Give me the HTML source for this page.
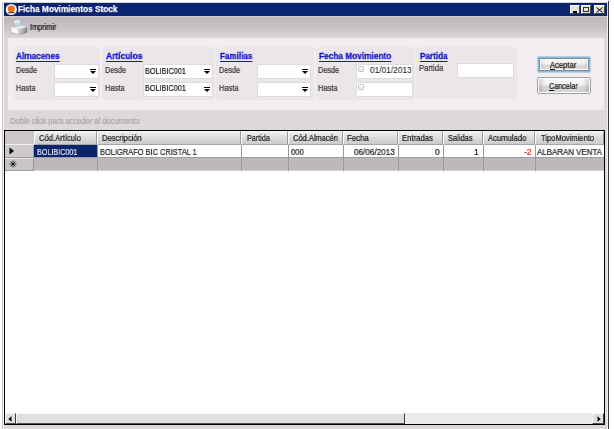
<!DOCTYPE html>
<html><head><meta charset="utf-8">
<style>
*{margin:0;padding:0;box-sizing:border-box}
html,body{width:614px;height:429px;overflow:hidden;background:#fff;font-family:"Liberation Sans",sans-serif}
.a{position:absolute}
.t{position:absolute;white-space:nowrap;line-height:1;transform-origin:0 0;will-change:transform}
.box{position:absolute;background:#fff;border:1px solid #dedade}
.grp{position:absolute;background:#eae6ea;border-radius:3px}
.hc{position:absolute;top:131px;height:14px;background:linear-gradient(#f0eef0,#e0dee0 40%,#cecace);border-left:1px solid #fafafa;border-top:1px solid #f6f6f6;border-right:1px solid #9c989c;border-bottom:1px solid #a8a4a8}
.vl{position:absolute;width:1px;background:#9c989c}
.wb{position:absolute;background:#e6e2dc;border-top:1px solid #fff;border-left:1px solid #fff;border-right:1px solid #404040;border-bottom:1px solid #404040}
</style></head><body>
<div class="a" style="left:2px;top:2px;width:607px;height:427px;background:#dcd8dc;border-left:1px solid #c8c4c8;border-top:1px solid #d4d0d4;border-right:1px solid #383838"></div><div class="a" style="left:608px;top:1px;width:1px;height:2px;background:#383838"></div><div class="a" style="left:607px;top:16px;width:1px;height:413px;background:#f0eef0"></div>
<div class="a" style="left:3px;top:3px;width:1px;height:426px;background:#f4f2f4"></div>
<div class="a" style="left:4px;top:3px;width:603px;height:13px;background:#0a2470"></div>

<svg class="a" style="left:5px;top:3px" width="13" height="13" viewBox="0 0 13 13"><circle cx="6.3" cy="6.5" r="5.6" fill="#f4f4f8"/><circle cx="6.3" cy="6" r="3.4" fill="#f07014"/><rect x="3.2" y="9" width="6.2" height="1.2" fill="#5a4a3a"/></svg>

<div class="wb" style="left:570px;top:5px;width:10px;height:9px"></div>
<div class="a" style="left:572.5px;top:11.2px;width:4.5px;height:1.5px;background:#000"></div>
<div class="wb" style="left:581px;top:5px;width:10px;height:9px"></div>
<div class="a" style="left:583px;top:6.5px;width:6px;height:5.5px;border:1px solid #303030;border-top-width:1.6px"></div>
<div class="wb" style="left:594px;top:5px;width:11px;height:9px"></div>
<svg class="a" style="left:596px;top:6.5px" width="7" height="6" viewBox="0 0 7 6"><path d="M0.5 0.5L6.5 5.5M6.5 0.5L0.5 5.5" stroke="#000" stroke-width="1"/></svg>
<div class="a" style="left:4px;top:16px;width:603px;height:22px;background:linear-gradient(#d4d0d4 0px,#bcb8bc 2px,#c6c2c6 12px,#dad6da 22px)"></div>
<svg class="a" style="left:8px;top:17px" width="22" height="20" viewBox="0 0 22 20">
<defs><linearGradient id="pg" x1="0" y1="0" x2="1" y2="0.3"><stop offset="0" stop-color="#dcdcdc"/><stop offset="0.6" stop-color="#b4b4b4"/><stop offset="1" stop-color="#808080"/></linearGradient>
<linearGradient id="pp" x1="0" y1="0" x2="0.3" y2="1"><stop offset="0" stop-color="#ffffff"/><stop offset="0.35" stop-color="#f0f6fa"/><stop offset="0.45" stop-color="#cfe2ee"/><stop offset="1" stop-color="#b4cede"/></linearGradient></defs>
<path d="M5.8 4.2 L11 3 L13.8 8.3 L8.2 9.2 Z" fill="url(#pp)"/>
<path d="M3.2 10.6 L14.6 8.4 L19 10 L9.8 12.4 Z" fill="#e8e8e8"/>
<path d="M3.2 10.6 L9.8 12.4 L10.4 17.4 L4 15.6 Z" fill="#f8f8f8"/>
<path d="M9.8 12.4 L19 10 Q19.8 13.6 18.8 15.6 Q18 16.4 16.5 16.6 L10.4 17.4 Z" fill="url(#pg)"/>
<path d="M4 15.6 L10.4 17.4 L16.5 16.6" stroke="#8a8a8a" stroke-width="0.6" fill="none" opacity="0.6"/>
</svg>
<div class="a" style="left:8px;top:38px;width:596px;height:72px;background:#f1edf1"></div>
<div class="grp" style="left:14px;top:47px;width:86px;height:53px"></div>
<div class="grp" style="left:102px;top:47px;width:113px;height:53px"></div>
<div class="grp" style="left:216px;top:47px;width:98px;height:53px"></div>
<div class="grp" style="left:316px;top:47px;width:99px;height:53px"></div>
<div class="grp" style="left:416px;top:47px;width:101px;height:52px"></div>
<div class="box" style="left:54px;top:64px;width:45px;height:15px"></div><svg class="a" style="left:90px;top:69px" width="6" height="6" viewBox="0 0 6 6"><path d="M0 0.5H6" stroke="#000" stroke-width="1"/><path d="M0 2L6 2L3 5Z" fill="#000"/></svg><div class="box" style="left:54px;top:82px;width:45px;height:15px"></div><svg class="a" style="left:90px;top:87px" width="6" height="6" viewBox="0 0 6 6"><path d="M0 0.5H6" stroke="#000" stroke-width="1"/><path d="M0 2L6 2L3 5Z" fill="#000"/></svg><div class="box" style="left:143px;top:64px;width:70px;height:15px"></div><svg class="a" style="left:204px;top:69px" width="6" height="6" viewBox="0 0 6 6"><path d="M0 0.5H6" stroke="#000" stroke-width="1"/><path d="M0 2L6 2L3 5Z" fill="#000"/></svg><div class="box" style="left:143px;top:82px;width:70px;height:15px"></div><svg class="a" style="left:204px;top:87px" width="6" height="6" viewBox="0 0 6 6"><path d="M0 0.5H6" stroke="#000" stroke-width="1"/><path d="M0 2L6 2L3 5Z" fill="#000"/></svg><div class="box" style="left:257px;top:64px;width:54px;height:15px"></div><svg class="a" style="left:302px;top:69px" width="6" height="6" viewBox="0 0 6 6"><path d="M0 0.5H6" stroke="#000" stroke-width="1"/><path d="M0 2L6 2L3 5Z" fill="#000"/></svg><div class="box" style="left:257px;top:82px;width:54px;height:15px"></div><svg class="a" style="left:302px;top:87px" width="6" height="6" viewBox="0 0 6 6"><path d="M0 0.5H6" stroke="#000" stroke-width="1"/><path d="M0 2L6 2L3 5Z" fill="#000"/></svg><div class="box" style="left:356px;top:64px;width:57px;height:15px"></div><div class="a" style="left:358px;top:66px;width:6px;height:6px;border:1px solid #b8c0c8;border-radius:1.5px;background:linear-gradient(#fff,#e4e8ec)"></div><div class="box" style="left:356px;top:82px;width:57px;height:15px"></div><div class="a" style="left:358px;top:84px;width:6px;height:6px;border:1px solid #b8c0c8;border-radius:1.5px;background:linear-gradient(#fff,#e4e8ec)"></div><div class="box" style="left:457px;top:63px;width:57px;height:15px"></div>
<div class="a" style="left:537px;top:56px;width:54px;height:17px;border:1px solid #b0d2ec;border-radius:2px;background:linear-gradient(#fcfcfc,#f0f0f0 45%,#dcdcdc 55%,#d2d2d2);box-shadow:inset 0 0 0 1px #90b8d8,inset 0 0 0 2px #848c94,inset 0 0 0 3px #fafafa,inset 7px 0 6px -5px rgba(0,0,0,.18),inset -7px 0 6px -5px rgba(0,0,0,.18)"></div>
<div class="a" style="left:537px;top:77px;width:54px;height:17px;border:1px solid #a0a0a0;border-radius:2px;background:linear-gradient(#fcfcfc,#f2f2f2 45%,#dcdcdc 55%,#d2d2d2);box-shadow:inset 0 0 0 1px #fcfcfc,inset 8px 0 6px -5px rgba(0,0,0,.2),inset -8px 0 6px -5px rgba(0,0,0,.2)"></div>
<div class="a" style="left:4px;top:130px;width:601px;height:295px;border:1px solid #000;background:#fff"></div>
<div class="a" style="left:5px;top:131px;width:29px;height:14px;background:#cbc7cb"></div>
<div class="hc" style="left:34px;width:63px"></div>
<div class="hc" style="left:97px;width:144px"></div>
<div class="hc" style="left:241px;width:47px"></div>
<div class="hc" style="left:288px;width:55px"></div>
<div class="hc" style="left:343px;width:55px"></div>
<div class="hc" style="left:398px;width:45px"></div>
<div class="hc" style="left:443px;width:40px"></div>
<div class="hc" style="left:483px;width:52px"></div>
<div class="hc" style="left:535px;width:69px"></div>
<div class="a" style="left:5px;top:144px;width:29px;height:14px;background:#cdc9cd;border-top:1px solid #f4f2f4;border-bottom:1px solid #9c989c"></div>
<svg class="a" style="left:9px;top:147px" width="6" height="8" viewBox="0 0 6 8"><path d="M0.5 0.5L5 4L0.5 7.5Z" fill="#000"/></svg>
<div class="a" style="left:34px;top:145px;width:570px;height:12px;background:#fff"></div>
<div class="a" style="left:34px;top:145px;width:63px;height:12px;background:#0a246a"></div>
<div class="a" style="left:5px;top:157px;width:599px;height:14px;background:#bcb8bc;border-top:1px solid #a09ca0;border-bottom:1px solid #d8d4d8"></div>
<div class="a" style="left:5px;top:158px;width:29px;height:13px;background:#c8c4c8;border-top:1px solid #e8e6e8;border-bottom:1px solid #a0a0a0"></div>
<svg class="a" style="left:9px;top:160px" width="8" height="8" viewBox="0 0 8 8"><path d="M4 0.5V7.5M0.5 4H7.5M1.5 1.5L6.5 6.5M6.5 1.5L1.5 6.5" stroke="#101010" stroke-width="0.8"/></svg>
<div class="vl" style="left:97px;top:145px;height:26px"></div>
<div class="vl" style="left:241px;top:145px;height:26px"></div>
<div class="vl" style="left:288px;top:145px;height:26px"></div>
<div class="vl" style="left:343px;top:145px;height:26px"></div>
<div class="vl" style="left:398px;top:145px;height:26px"></div>
<div class="vl" style="left:443px;top:145px;height:26px"></div>
<div class="vl" style="left:483px;top:145px;height:26px"></div>
<div class="vl" style="left:535px;top:145px;height:26px"></div>
<div class="vl" style="left:33px;top:145px;height:26px;background:#9c989c"></div>
<div class="a" style="left:5px;top:413px;width:599px;height:11px;background:#ecebec"></div>
<div class="a" style="left:5px;top:413px;width:11px;height:11px;background:#e0dee0;border-top:1px solid #f8f8f8;border-left:1px solid #f8f8f8;border-right:1px solid #404040;border-bottom:1px solid #505050"></div>
<svg class="a" style="left:8px;top:415.5px" width="4" height="6" viewBox="0 0 4 6"><path d="M3.5 0.3L0.3 3L3.5 5.7Z" fill="#000"/></svg>
<div class="a" style="left:16px;top:413px;width:389px;height:11px;background:#e0dee0;border-top:1px solid #f8f8f8;border-left:1px solid #f8f8f8;border-right:1px solid #404040;border-bottom:1px solid #505050"></div>
<div class="a" style="left:592px;top:413px;width:12px;height:11px;background:#e0dee0;border-top:1px solid #f8f8f8;border-left:1px solid #f8f8f8;border-right:1px solid #404040;border-bottom:1px solid #505050"></div>
<svg class="a" style="left:596.5px;top:415.5px" width="4" height="6" viewBox="0 0 4 6"><path d="M0.5 0.3L3.7 3L0.5 5.7Z" fill="#000"/></svg>
<div class="t" style="left:18.10px;top:4.24px;font-size:9.4px;font-weight:bold;color:#ffffff;transform:scaleX(0.885);-webkit-text-stroke:0.25px #fff">Ficha Movimientos Stock</div>
<div class="t" style="left:29.90px;top:22.82px;font-size:8.6px;color:#101010;transform:scaleX(0.847);-webkit-text-stroke:0.2px #101010">Imprimir</div>
<div class="t" style="left:16.00px;top:51.98px;font-size:9px;font-weight:bold;color:#1414cc;transform:scaleX(0.920);text-decoration:underline;text-underline-offset:1.5px;text-decoration-thickness:1px;-webkit-text-stroke:0.3px #1414cc">Almacenes</div>
<div class="t" style="left:105.50px;top:51.98px;font-size:9px;font-weight:bold;color:#1414cc;transform:scaleX(0.936);text-decoration:underline;text-underline-offset:1.5px;text-decoration-thickness:1px;-webkit-text-stroke:0.3px #1414cc">Artículos</div>
<div class="t" style="left:219.80px;top:51.98px;font-size:9px;font-weight:bold;color:#1414cc;transform:scaleX(0.900);text-decoration:underline;text-underline-offset:1.5px;text-decoration-thickness:1px;-webkit-text-stroke:0.3px #1414cc">Familias</div>
<div class="t" style="left:318.90px;top:51.98px;font-size:9px;font-weight:bold;color:#1414cc;transform:scaleX(0.921);text-decoration:underline;text-underline-offset:1.5px;text-decoration-thickness:1px;-webkit-text-stroke:0.3px #1414cc">Fecha Movimiento</div>
<div class="t" style="left:419.80px;top:51.98px;font-size:9px;font-weight:bold;color:#1414cc;transform:scaleX(0.905);text-decoration:underline;text-underline-offset:1.5px;text-decoration-thickness:1px;-webkit-text-stroke:0.3px #1414cc">Partida</div>
<div class="t" style="left:16.00px;top:65.52px;font-size:8.6px;color:#383838;transform:scaleX(0.850);-webkit-text-stroke:0.22px #383838">Desde</div>
<div class="t" style="left:16.00px;top:83.52px;font-size:8.6px;color:#383838;transform:scaleX(0.873);-webkit-text-stroke:0.22px #383838">Hasta</div>
<div class="t" style="left:105.00px;top:65.52px;font-size:8.6px;color:#383838;transform:scaleX(0.850);-webkit-text-stroke:0.22px #383838">Desde</div>
<div class="t" style="left:105.00px;top:83.52px;font-size:8.6px;color:#383838;transform:scaleX(0.873);-webkit-text-stroke:0.22px #383838">Hasta</div>
<div class="t" style="left:219.00px;top:65.52px;font-size:8.6px;color:#383838;transform:scaleX(0.850);-webkit-text-stroke:0.22px #383838">Desde</div>
<div class="t" style="left:219.00px;top:83.52px;font-size:8.6px;color:#383838;transform:scaleX(0.873);-webkit-text-stroke:0.22px #383838">Hasta</div>
<div class="t" style="left:318.00px;top:65.52px;font-size:8.6px;color:#383838;transform:scaleX(0.850);-webkit-text-stroke:0.22px #383838">Desde</div>
<div class="t" style="left:318.00px;top:83.52px;font-size:8.6px;color:#383838;transform:scaleX(0.873);-webkit-text-stroke:0.22px #383838">Hasta</div>
<div class="t" style="left:419.30px;top:64.32px;font-size:8.6px;color:#383838;transform:scaleX(0.889);-webkit-text-stroke:0.22px #383838">Partida</div>
<div class="t" style="left:145.00px;top:66.82px;font-size:8.6px;color:#1a1a1a;transform:scaleX(0.846);-webkit-text-stroke:0.22px #1a1a1a">BOLIBIC001</div>
<div class="t" style="left:145.00px;top:84.42px;font-size:8.6px;color:#1a1a1a;transform:scaleX(0.846);-webkit-text-stroke:0.22px #1a1a1a">BOLIBIC001</div>
<div class="t" style="left:370.00px;top:65.83px;font-size:9.3px;color:#1a1a1a;transform:scaleX(0.897);-webkit-text-stroke:0.05px #1a1a1a">01/01/2013</div>
<div class="t" style="left:550.20px;top:60.52px;font-size:8.6px;color:#1a1a1a;transform:scaleX(0.887);-webkit-text-stroke:0.22px #1a1a1a"><u>A</u>ceptar</div>
<div class="t" style="left:549.20px;top:81.52px;font-size:8.6px;color:#1a1a1a;transform:scaleX(0.834);-webkit-text-stroke:0.22px #1a1a1a"><u>C</u>ancelar</div>
<div class="t" style="left:9.60px;top:117.29px;font-size:8.4px;color:#a8a4a8;transform:scaleX(0.897);-webkit-text-stroke:0.22px #a8a4a8">Doble click para acceder al documento</div>
<div class="t" style="left:38.60px;top:133.72px;font-size:8.6px;color:#1c1c1c;transform:scaleX(0.886);-webkit-text-stroke:0.22px #1c1c1c">Cód.Artículo</div>
<div class="t" style="left:102.00px;top:133.72px;font-size:8.6px;color:#1c1c1c;transform:scaleX(0.884);-webkit-text-stroke:0.22px #1c1c1c">Descripción</div>
<div class="t" style="left:246.90px;top:133.72px;font-size:8.6px;color:#1c1c1c;transform:scaleX(0.838);-webkit-text-stroke:0.22px #1c1c1c">Partida</div>
<div class="t" style="left:292.90px;top:133.72px;font-size:8.6px;color:#1c1c1c;transform:scaleX(0.872);-webkit-text-stroke:0.22px #1c1c1c">Cód.Almacén</div>
<div class="t" style="left:346.80px;top:133.72px;font-size:8.6px;color:#1c1c1c;transform:scaleX(0.913);-webkit-text-stroke:0.22px #1c1c1c">Fecha</div>
<div class="t" style="left:402.30px;top:133.72px;font-size:8.6px;color:#1c1c1c;transform:scaleX(0.900);-webkit-text-stroke:0.22px #1c1c1c">Entradas</div>
<div class="t" style="left:447.80px;top:133.72px;font-size:8.6px;color:#1c1c1c;transform:scaleX(0.868);-webkit-text-stroke:0.22px #1c1c1c">Salidas</div>
<div class="t" style="left:487.50px;top:133.72px;font-size:8.6px;color:#1c1c1c;transform:scaleX(0.891);-webkit-text-stroke:0.22px #1c1c1c">Acumulado</div>
<div class="t" style="left:540.70px;top:133.72px;font-size:8.6px;color:#1c1c1c;transform:scaleX(0.879);-webkit-text-stroke:0.22px #1c1c1c">TipoMovimiento</div>
<div class="t" style="left:36.80px;top:147.82px;font-size:8.6px;color:#e4e8ff;transform:scaleX(0.836);-webkit-text-stroke:0.22px #e4e8ff">BOLIBIC001</div>
<div class="t" style="left:100.00px;top:147.82px;font-size:8.6px;color:#1c1c1c;transform:scaleX(0.866);-webkit-text-stroke:0.22px #1c1c1c">BOLIGRAFO BIC CRISTAL 1</div>
<div class="t" style="left:290.80px;top:147.82px;font-size:8.6px;color:#1c1c1c;transform:scaleX(0.893);-webkit-text-stroke:0.22px #1c1c1c">000</div>
<div class="t" style="left:353.50px;top:147.82px;font-size:8.6px;color:#1c1c1c;transform:scaleX(0.948);-webkit-text-stroke:0.22px #1c1c1c">06/06/2013</div>
<div class="t" style="left:434.70px;top:147.82px;font-size:8.6px;color:#1c1c1c;transform:scaleX(1.000);-webkit-text-stroke:0.22px #1c1c1c">0</div>
<div class="t" style="left:474.30px;top:147.82px;font-size:8.6px;color:#1c1c1c;transform:scaleX(1.000);-webkit-text-stroke:0.22px #1c1c1c">1</div>
<div class="t" style="left:524.14px;top:147.82px;font-size:8.6px;color:#e02020;transform:scaleX(1.000);-webkit-text-stroke:0.22px #e02020">-2</div>
<div class="t" style="left:536.60px;top:147.82px;font-size:8.6px;color:#1c1c1c;transform:scaleX(0.921);-webkit-text-stroke:0.22px #1c1c1c">ALBARAN VENTA</div>
</body></html>
